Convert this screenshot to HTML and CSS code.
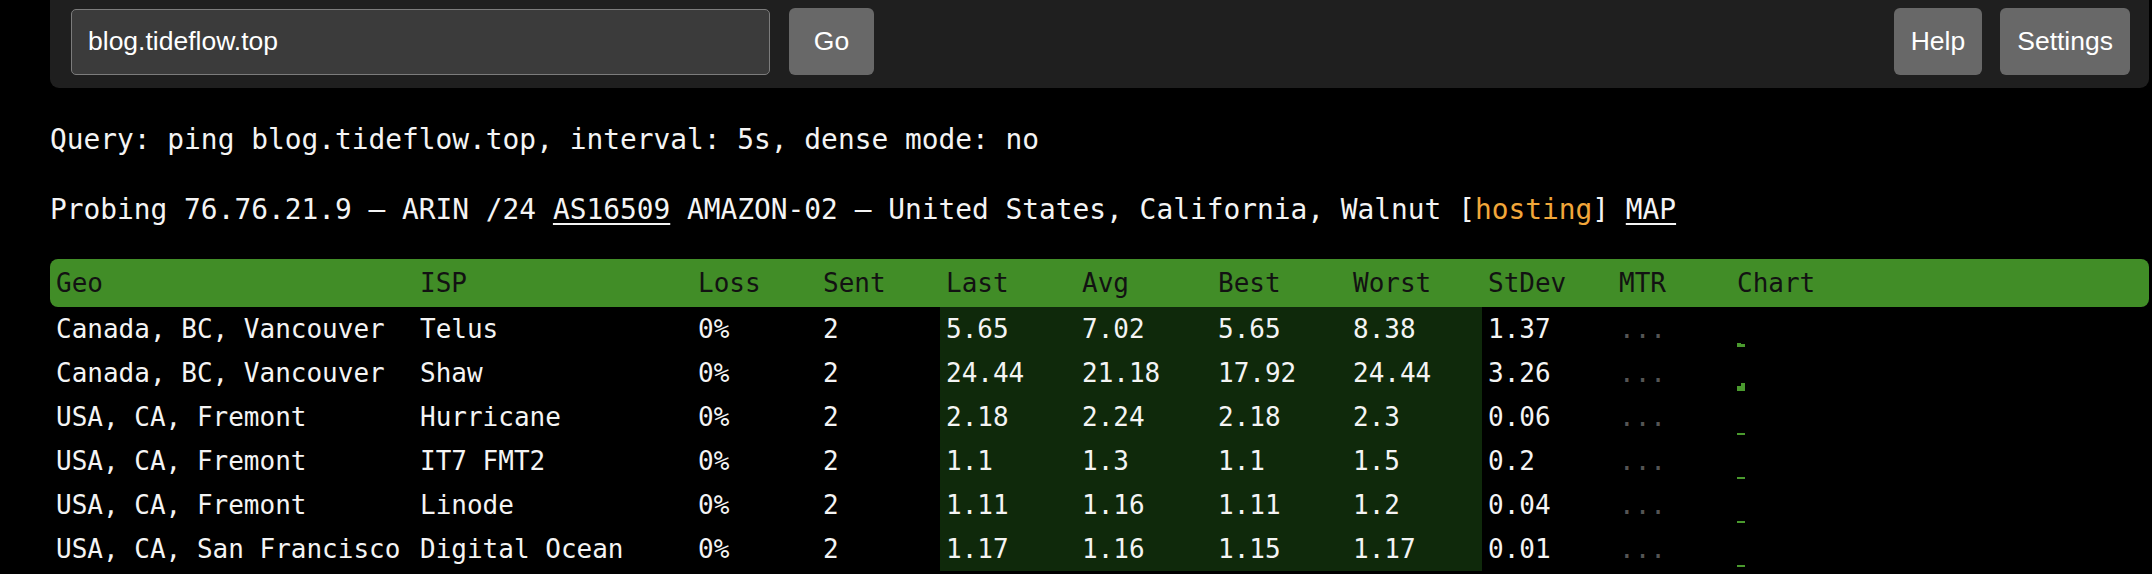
FILE: index.html
```html
<!DOCTYPE html>
<html lang="en">
<head>
<meta charset="utf-8">
<title>Ping</title>
<link rel="stylesheet" href="styles.css">
</head>
<body>
<div class="page">
  <div class="toolbar">
    <div class="search">
      <input class="query-input" type="text" value="blog.tideflow.top">
      <button class="btn btn-go">Go</button>
    </div>
    <div class="actions">
      <button class="btn">Help</button>
      <button class="btn">Settings</button>
    </div>
  </div>

  <div class="line line-query">Query: ping blog.tideflow.top, interval: 5s, dense mode: no</div>
  <div class="line line-probe">Probing 76.76.21.9 — ARIN /24 <a class="link" href="#">AS16509</a> AMAZON-02 — United States, California, Walnut [<span class="tag">hosting</span>] <a class="link" href="#">MAP</a></div>

  <table class="results">
    <colgroup>
      <col class="c-geo"><col class="c-isp"><col class="c-loss"><col class="c-sent">
      <col class="c-last"><col class="c-avg"><col class="c-best"><col class="c-worst">
      <col class="c-stdev"><col class="c-mtr"><col class="c-chart">
    </colgroup>
    <thead>
      <tr>
        <th>Geo</th><th>ISP</th><th>Loss</th><th>Sent</th><th>Last</th><th>Avg</th><th>Best</th><th>Worst</th><th>StDev</th><th>MTR</th><th>Chart</th>
      </tr>
    </thead>
    <tbody>
      <tr>
        <td>Canada, BC, Vancouver</td><td>Telus</td><td>0%</td><td>2</td>
        <td class="hl">5.65</td><td class="hl">7.02</td><td class="hl">5.65</td><td class="hl">8.38</td>
        <td>1.37</td><td class="mtr">...</td>
        <td class="chart"><div class="spark"><span class="bar" style="height:4px"></span><span class="bar" style="height:3px"></span></div></td>
      </tr>
      <tr>
        <td>Canada, BC, Vancouver</td><td>Shaw</td><td>0%</td><td>2</td>
        <td class="hl">24.44</td><td class="hl">21.18</td><td class="hl">17.92</td><td class="hl">24.44</td>
        <td>3.26</td><td class="mtr">...</td>
        <td class="chart"><div class="spark"><span class="bar" style="height:5px"></span><span class="bar" style="height:8px"></span></div></td>
      </tr>
      <tr>
        <td>USA, CA, Fremont</td><td>Hurricane</td><td>0%</td><td>2</td>
        <td class="hl">2.18</td><td class="hl">2.24</td><td class="hl">2.18</td><td class="hl">2.3</td>
        <td>0.06</td><td class="mtr">...</td>
        <td class="chart"><div class="spark"><span class="bar" style="height:2px"></span><span class="bar" style="height:2px"></span></div></td>
      </tr>
      <tr>
        <td>USA, CA, Fremont</td><td>IT7 FMT2</td><td>0%</td><td>2</td>
        <td class="hl">1.1</td><td class="hl">1.3</td><td class="hl">1.1</td><td class="hl">1.5</td>
        <td>0.2</td><td class="mtr">...</td>
        <td class="chart"><div class="spark"><span class="bar" style="height:2px"></span><span class="bar" style="height:2px"></span></div></td>
      </tr>
      <tr>
        <td>USA, CA, Fremont</td><td>Linode</td><td>0%</td><td>2</td>
        <td class="hl">1.11</td><td class="hl">1.16</td><td class="hl">1.11</td><td class="hl">1.2</td>
        <td>0.04</td><td class="mtr">...</td>
        <td class="chart"><div class="spark"><span class="bar" style="height:2px"></span><span class="bar" style="height:2px"></span></div></td>
      </tr>
      <tr>
        <td>USA, CA, San Francisco</td><td>Digital Ocean</td><td>0%</td><td>2</td>
        <td class="hl">1.17</td><td class="hl">1.16</td><td class="hl">1.15</td><td class="hl">1.17</td>
        <td>0.01</td><td class="mtr">...</td>
        <td class="chart"><div class="spark"><span class="bar" style="height:2px"></span><span class="bar" style="height:2px"></span></div></td>
      </tr>
    </tbody>
  </table>
</div>
</body>
</html>
```

FILE: styles.css
```css
html, body {
  margin: 0;
  padding: 0;
  background: #000;
  overflow: hidden;
}

body {
  color: #f4f4f4;
  font-family: "DejaVu Sans Mono", "Liberation Mono", monospace;
  font-size: 27.85px;
}

.page {
  margin-left: 50px;
  width: 2099px;
}

/* ---------- toolbar ---------- */
.toolbar {
  display: flex;
  justify-content: space-between;
  align-items: center;
  background: #1f1f1f;
  border-radius: 0 0 9px 9px;
  padding: 8px 19px 13px 21px;
  height: 67px;
}

.search,
.actions {
  display: flex;
  align-items: center;
  height: 100%;
}

.search { gap: 19px; }
.actions { gap: 18px; }

.query-input {
  box-sizing: border-box;
  width: 699px;
  height: 66px;
  background: #3b3b3b;
  border: 1.5px solid #7c7c7c;
  border-radius: 5px;
  color: #fff;
  font-family: "Liberation Sans", Arial, sans-serif;
  font-size: 26.5px;
  padding: 0 0 0 16px;
  outline: none;
}

.btn {
  box-sizing: border-box;
  height: 67px;
  padding: 0 17px;
  background: #686868;
  color: #fff;
  border: none;
  border-radius: 6px;
  font-family: "Liberation Sans", Arial, sans-serif;
  font-size: 26.5px;
  cursor: pointer;
}

.btn-go {
  width: 85px;
  padding: 0;
}

/* ---------- text lines ---------- */
.line {
  line-height: 40px;
  white-space: pre;
}

.line-query { margin-top: 32px; }
.line-probe { margin-top: 30px; }

.link {
  color: #f4f4f4;
  text-decoration: underline;
  text-underline-offset: 4px;
  text-decoration-thickness: 2px;
}

.tag { color: #f2a73a; }

/* ---------- table ---------- */
.results {
  margin-top: 29px;
  width: 2099px;
  table-layout: fixed;
  border-collapse: collapse;
  border-spacing: 0;
  font-size: 26px;
}

.c-geo { width: 364px; }
.c-isp { width: 278px; }
.c-loss { width: 125px; }
.c-sent { width: 123px; }
.c-last { width: 136px; }
.c-avg { width: 136px; }
.c-best { width: 135px; }
.c-worst { width: 135px; }
.c-stdev { width: 131px; }
.c-mtr { width: 118px; }
.c-chart { width: 418px; }

.results th,
.results td {
  box-sizing: border-box;
  padding: 0 6px;
  white-space: nowrap;
  text-align: left;
}

.results th {
  height: 48px;
  background: #418d27;
  color: #121212;
  font-weight: normal;
}

.results th:first-child { border-radius: 8px 0 0 8px; }
.results th:last-child { border-radius: 0 8px 8px 0; }

.results td {
  height: 44px;
  line-height: 44px;
  vertical-align: middle;
}

.results td.hl { background: #0f290b; }

.results td.mtr { color: #555; }

.results td.chart {
  vertical-align: bottom;
  line-height: 0;
  padding-bottom: 4px;
}

.spark {
  display: flex;
  align-items: flex-end;
  height: 10px;
}

.bar {
  display: block;
  width: 4px;
  background: #4a9a2e;
}
```
